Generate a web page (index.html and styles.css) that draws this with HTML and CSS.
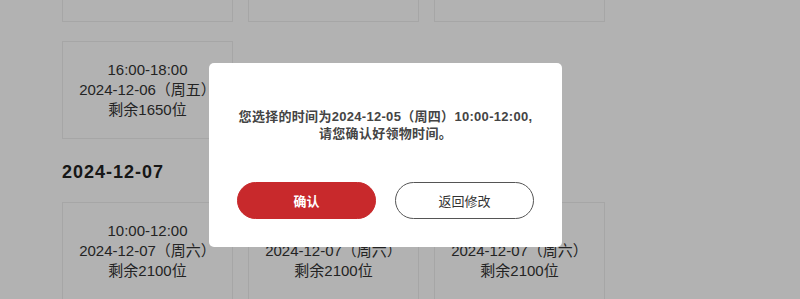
FILE: index.html
```html
<!DOCTYPE html>
<html lang="zh-CN">
<head>
<meta charset="utf-8">
<title>选择领物时间</title>
<link rel="stylesheet" href="styles.css">
</head>
<body>
<div class="page">
  <section class="group">
    <h2 class="date">2024-12-06</h2>
    <div class="slots">
      <div class="slot"><span>10:00-12:00</span><span>2024-12-06（周五）</span><span>剩余1800位</span></div>
      <div class="slot"><span>12:00-14:00</span><span>2024-12-06（周五）</span><span>剩余1750位</span></div>
      <div class="slot"><span>14:00-16:00</span><span>2024-12-06（周五）</span><span>剩余1700位</span></div>
      <div class="slot"><span>16:00-18:00</span><span>2024-12-06（周五）</span><span>剩余1650位</span></div>
    </div>
  </section>
  <section class="group">
    <h2 class="date">2024-12-07</h2>
    <div class="slots">
      <div class="slot"><span>10:00-12:00</span><span>2024-12-07（周六）</span><span>剩余2100位</span></div>
      <div class="slot"><span>12:00-14:00</span><span>2024-12-07（周六）</span><span>剩余2100位</span></div>
      <div class="slot"><span>14:00-16:00</span><span>2024-12-07（周六）</span><span>剩余2100位</span></div>
    </div>
  </section>
</div>

<div class="overlay">
  <div class="modal">
    <p class="msg">您选择的时间为2024-12-05（周四）10:00-12:00,<br>请您确认好领物时间。</p>
    <div class="actions">
      <button class="btn btn-primary">确认</button>
      <button class="btn btn-outline">返回修改</button>
    </div>
  </div>
</div>
</body>
</html>
```

FILE: styles.css
```css
* { box-sizing: border-box; }

html, body {
  margin: 0;
  background: #fff;
  font-family: "Liberation Sans", "Noto Sans CJK SC", sans-serif;
  color: #333;
}

.page {
  margin-top: -118px;
  padding-left: 62px;
}

.date {
  margin: 0 0 18px;
  height: 24px;
  font-size: 18px;
  line-height: 24px;
  font-weight: 700;
  letter-spacing: 1px;
  color: #222;
}

.group + .group .date {
  margin-top: 21px;
}

.slots {
  display: grid;
  grid-template-columns: repeat(3, 171px);
  column-gap: 15px;
  row-gap: 19px;
}

.slot {
  height: 98px;
  border: 1px solid #eeeeee;
  background: #fff;
  display: flex;
  flex-direction: column;
  align-items: center;
  justify-content: center;
  font-size: 15px;
  line-height: 20px;
  color: #333;
}

.overlay {
  position: fixed;
  inset: 0;
  background: rgba(0, 0, 0, 0.3);
  display: flex;
  justify-content: center;
  align-items: center;
  padding: 11px 29px 0 0;
}

.modal {
  width: 353px;
  height: 184px;
  background: #fff;
  border-radius: 5px;
  padding: 45px 28px 28px;
  display: flex;
  flex-direction: column;
}

.msg {
  margin: 0;
  text-align: center;
  font-size: 13px;
  line-height: 17px;
  font-weight: 700;
  letter-spacing: 0.3px;
  color: #444;
}

.actions {
  margin-top: auto;
  display: flex;
  gap: 19px;
}

.btn {
  flex: 1;
  height: 37px;
  border-radius: 19px;
  font-family: "Liberation Sans", "Noto Sans CJK SC", sans-serif;
  font-size: 13px;
  cursor: pointer;
}

.btn-primary {
  background: #c8292c;
  border: 1px solid #c8292c;
  color: #fff;
  font-weight: 700;
}

.btn-outline {
  background: #fff;
  border: 1px solid #555;
  color: #333;
}
```
